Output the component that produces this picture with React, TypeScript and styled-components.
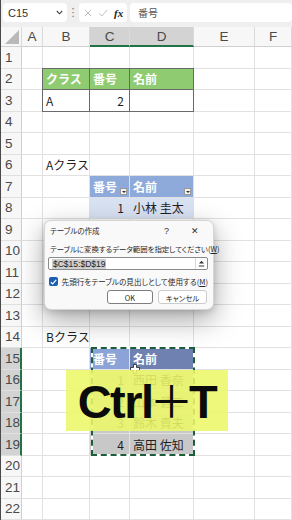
import React from "react"
import styled, { createGlobalStyle } from "styled-components"

const GlobalStyle = createGlobalStyle`
  html, body { margin: 0; padding: 0; background: #fff; }
  body { font-family: "Noto Sans CJK JP", "Liberation Sans", sans-serif; }
`

const ROW_H = 21.5
const ROWS = 22
const COLS = ["A", "B", "C", "D", "E", "F"]
const SEL_COLS = ["C", "D"]
const SEL_ROWS = [15, 16, 17, 18, 19]

type Kind = "plain" | "green" | "boxed" | "blueHead" | "blueBody" | "slateHead" | "slateActive" | "selected"

interface CellData {
  text?: string
  kind?: Kind
  align?: "left" | "right"
  filter?: boolean
}

const cells: Record<string, CellData> = {
  B2: { text: "クラス", kind: "green" },
  C2: { text: "番号", kind: "green" },
  D2: { text: "名前", kind: "green" },
  B3: { text: "A", kind: "boxed" },
  C3: { text: "2", kind: "boxed", align: "right" },
  D3: { kind: "boxed" },
  B6: { text: "Aクラス" },
  C7: { text: "番号", kind: "blueHead", filter: true },
  D7: { text: "名前", kind: "blueHead", filter: true },
  C8: { text: "1", kind: "blueBody", align: "right" },
  D8: { text: "小林 圭太", kind: "blueBody" },
  B14: { text: "Bクラス" },
  C15: { text: "番号", kind: "slateActive" },
  D15: { text: "名前", kind: "slateHead" },
  C16: { text: "1", kind: "selected", align: "right" },
  D16: { text: "西田 香奈", kind: "selected" },
  C17: { text: "2", kind: "selected", align: "right" },
  D17: { text: "山本 健二", kind: "selected" },
  C18: { text: "3", kind: "selected", align: "right" },
  D18: { text: "鈴木 貴夫", kind: "selected" },
  C19: { text: "4", kind: "selected", align: "right" },
  D19: { text: "高田 佐知", kind: "selected" },
}

const fills: Record<Kind, { bg: string; color: string; bold?: boolean; box?: string }> = {
  plain: { bg: "#ffffff", color: "#1f1f1f" },
  green: { bg: "#8fcb70", color: "#ffffff", bold: true, box: "#6a6a6a" },
  boxed: { bg: "#ffffff", color: "#1f1f1f", box: "#6a6a6a" },
  blueHead: { bg: "#8eaadb", color: "#ffffff", bold: true },
  blueBody: { bg: "#d9e2f3", color: "#1f1f1f" },
  slateHead: { bg: "#6e81b0", color: "#ffffff", bold: true },
  slateActive: { bg: "#8ba3d6", color: "#ffffff", bold: true },
  selected: { bg: "#c8c8c8", color: "#1f1f1f" },
}

const Screen = styled.div`
  position: relative;
  width: 292px;
  height: 520px;
  overflow: hidden;
  background: #ffffff;
  border-left: 1px solid #4a4a4a;
  box-sizing: border-box;
`

const FormulaBar = styled.div`
  display: flex;
  align-items: stretch;
  gap: 3px;
  height: 27px;
  padding: 3px 0 5px 2px;
  box-sizing: border-box;
  background: #efefef;
`

const BarBox = styled.div<{ $width?: number }>`
  display: flex;
  align-items: center;
  background: #ffffff;
  border-radius: 4px;
  box-sizing: border-box;
  ${(p) => (p.$width ? `width: ${p.$width}px;` : "flex: 1;")}
`

const NameBox = styled(BarBox)`
  justify-content: space-between;
  padding: 0 4px 0 5px;
  font-family: "Liberation Sans", sans-serif;
  font-size: 11px;
  color: #333;
`

const BarDots = styled.div`
  display: flex;
  align-items: center;
  width: 6px;
  justify-content: center;
  color: #777;
  font-size: 11px;
  font-family: "DejaVu Sans", sans-serif;
`

const FxBox = styled(BarBox)`
  gap: 6px;
  padding-left: 5px;
`

const FxLabel = styled.span`
  font-family: "Liberation Serif", serif;
  font-style: italic;
  font-weight: bold;
  font-size: 11px;
  color: #222;
`

const FormulaText = styled(BarBox)`
  padding-left: 8px;
  font-size: 10px;
  color: #555;
`

const Sheet = styled.div`
  display: grid;
  grid-template-columns: 21px 21px 47px 40px 64px 61px 1fr;
  grid-template-rows: 20px;
  grid-auto-rows: ${ROW_H}px;
`

const Corner = styled.div`
  position: relative;
  background: #f7f7f7;
  border-right: 1px solid #d8d8d8;
  border-bottom: 1px solid #d0d0d0;
  box-sizing: border-box;
  &::after {
    content: "";
    position: absolute;
    right: 2px;
    bottom: 2px;
    width: 14px;
    height: 14px;
    background: #b9b9b9;
    clip-path: polygon(100% 0, 100% 100%, 0 100%);
  }
`

const ColHeader = styled.div<{ $selected?: boolean }>`
  display: flex;
  align-items: center;
  justify-content: center;
  font-family: "Liberation Sans", sans-serif;
  font-size: 13.5px;
  color: #4a4a4a;
  background: ${(p) => (p.$selected ? "#d3d3d3" : "#f7f7f7")};
  border-right: 1px solid #dadada;
  border-bottom: ${(p) => (p.$selected ? "2px solid #217346" : "1px solid #d0d0d0")};
  box-sizing: border-box;
`

const RowHeader = styled.div<{ $selected?: boolean }>`
  display: flex;
  align-items: center;
  padding-left: 4px;
  font-family: "Liberation Sans", sans-serif;
  font-size: 13.5px;
  color: #4a4a4a;
  background: ${(p) => (p.$selected ? "#d3d3d3" : "#f7f7f7")};
  border-right: ${(p) => (p.$selected ? "2px solid #217346" : "1px solid #d0d0d0")};
  border-bottom: 1px solid #e0e0e0;
  box-sizing: border-box;
`

const Cell = styled.div<{ $kind: Kind; $align: "left" | "right" }>`
  position: relative;
  display: flex;
  align-items: center;
  justify-content: ${(p) => (p.$align === "right" ? "flex-end" : "flex-start")};
  padding: ${(p) => (p.$align === "right" ? "0 5px 0 3px" : "0 3px")};
  font-size: 12px;
  white-space: nowrap;
  color: ${(p) => fills[p.$kind].color};
  font-weight: ${(p) => (fills[p.$kind].bold ? 700 : 400)};
  background: ${(p) => fills[p.$kind].bg};
  border-right: 1px solid #e1e1e1;
  border-bottom: 1px solid #e1e1e1;
  box-sizing: border-box;
  ${(p) =>
    fills[p.$kind].box &&
    `
      &::after {
        content: "";
        position: absolute;
        inset: -1px;
        border: 1px solid ${fills[p.$kind].box};
        pointer-events: none;
        z-index: 1;
      }
    `}
`

const FilterButton = styled.span`
  align-self: flex-end;
  margin: 0 -1px 2px auto;
  width: 7px;
  height: 7px;
  background: #f2f2f2;
  border: 1px solid #9a9a9a;
  box-sizing: border-box;
  position: relative;
  &::after {
    content: "";
    position: absolute;
    left: 1px;
    top: 2px;
    border-left: 2px solid transparent;
    border-right: 2px solid transparent;
    border-top: 2px solid #333;
  }
`

const MarchingAnts = styled.div`
  position: absolute;
  left: 90px;
  top: 347px;
  width: 104px;
  height: 109px;
  border: 2px solid #ffffff;
  box-sizing: border-box;
  z-index: 2;
  &::after {
    content: "";
    position: absolute;
    inset: -2px;
    border: 2px dashed #1d5e3a;
  }
`

const Cursor = styled.svg`
  position: absolute;
  left: 129px;
  top: 364px;
  z-index: 3;
`

const KeyOverlay = styled.div`
  position: absolute;
  left: 65px;
  top: 370px;
  width: 162px;
  height: 61px;
  display: flex;
  align-items: center;
  justify-content: center;
  background: rgba(236, 247, 104, 0.88);
  z-index: 4;
`

const KeyText = styled.span`
  font-family: "Liberation Sans", sans-serif;
  font-weight: 700;
  font-size: 47px;
  letter-spacing: -1.5px;
  color: #0b0b0b;
  line-height: 1;
`

const KeyPlus = styled.span`
  font-family: "Noto Sans CJK JP", sans-serif;
  font-weight: 400;
  font-size: 44px;
  margin: 0 -3px;
`

const Dialog = styled.div`
  position: absolute;
  left: 43px;
  top: 220px;
  width: 170px;
  height: 90px;
  display: flex;
  flex-direction: column;
  padding: 0 5px 5px 3px;
  box-sizing: border-box;
  background: #f9f9f9;
  border: 1px solid #d6d6d6;
  border-radius: 7px;
  box-shadow: 0 10px 28px rgba(0, 0, 0, 0.35), 0 2px 6px rgba(0, 0, 0, 0.15);
  font-feature-settings: "palt";
  color: #2a2a2a;
  z-index: 5;
`

const DialogTitleBar = styled.div`
  display: flex;
  align-items: center;
  height: 20px;
  padding-left: 2px;
  font-size: 7.5px;
`

const TitleButtons = styled.div`
  display: flex;
  gap: 22px;
  margin-left: auto;
  margin-right: 9px;
  font-family: "Liberation Sans", sans-serif;
  font-size: 9px;
  color: #333;
`

const DialogLabel = styled.div`
  margin-top: 4px;
  padding-left: 2px;
  height: 10px;
  line-height: 10px;
  font-size: 7.4px;
  white-space: nowrap;
  u { text-underline-offset: 1px; }
`

const RangeField = styled.div`
  display: flex;
  align-items: center;
  margin-top: 3px;
  height: 13px;
  padding-left: 3px;
  background: #ffffff;
  border: 1px solid #8a8a8a;
  border-radius: 2px;
  box-sizing: border-box;
`

const RangeText = styled.span`
  background: #cfcfcf;
  font-family: "Liberation Sans", sans-serif;
  font-size: 8.5px;
  line-height: 10px;
  color: #222;
  padding: 0 1px;
`

const CollapseButton = styled.span`
  display: flex;
  align-items: center;
  justify-content: center;
  margin-left: auto;
  width: 11px;
  height: 100%;
  border-left: 1px solid #d8d8d8;
`

const CheckRow = styled.div`
  display: flex;
  align-items: center;
  gap: 4px;
  margin-top: 6px;
  padding-left: 1px;
  height: 12px;
  font-size: 7.6px;
  white-space: nowrap;
`

const CheckBox = styled.span`
  display: flex;
  align-items: center;
  justify-content: center;
  width: 9px;
  height: 9px;
  border-radius: 2px;
  background: #1a5fb4;
`

const ButtonRow = styled.div`
  display: flex;
  justify-content: flex-end;
  gap: 5px;
  margin-top: 3px;
  padding-right: 1px;
  height: 14px;
`

const DialogButton = styled.div<{ $default?: boolean }>`
  display: flex;
  align-items: center;
  justify-content: center;
  width: ${(p) => (p.$default ? 46 : 49)}px;
  background: #ffffff;
  border: 1px solid ${(p) => (p.$default ? "#7d7d7d" : "#cccccc")};
  border-radius: 3px;
  box-sizing: border-box;
  font-size: 7.4px;
  color: #222;
`

const App: React.FC = () => {
  const rows = Array.from({ length: ROWS }, (_, i) => i + 1)
  return (
    <>
      <GlobalStyle />
      <Screen>
        <FormulaBar>
          <NameBox $width={64}>
            C15
            <svg width="7" height="5" viewBox="0 0 7 5">
              <path d="M0.8 1 L3.5 3.8 L6.2 1" fill="none" stroke="#444" strokeWidth="1.1" />
            </svg>
          </NameBox>
          <BarDots>⋮</BarDots>
          <FxBox $width={48}>
            <svg width="8" height="8" viewBox="0 0 8 8">
              <path d="M1 1 L7 7 M7 1 L1 7" stroke="#b8b8b8" strokeWidth="0.9" />
            </svg>
            <svg width="10" height="8" viewBox="0 0 10 8">
              <path d="M1 4.2 L3.8 7 L9.2 1" fill="none" stroke="#b8b8b8" strokeWidth="0.9" />
            </svg>
            <FxLabel>fx</FxLabel>
          </FxBox>
          <FormulaText>番号</FormulaText>
        </FormulaBar>

        <Sheet>
          <Corner />
          {COLS.map((c) => (
            <ColHeader key={c} $selected={SEL_COLS.includes(c)}>
              {c}
            </ColHeader>
          ))}
          {rows.map((r) => (
            <React.Fragment key={r}>
              <RowHeader $selected={SEL_ROWS.includes(r)}>{r}</RowHeader>
              {COLS.map((c) => {
                const d = cells[`${c}${r}`] ?? {}
                return (
                  <Cell key={c} $kind={d.kind ?? "plain"} $align={d.align ?? "left"}>
                    {d.text}
                    {d.filter && <FilterButton />}
                  </Cell>
                )
              })}
            </React.Fragment>
          ))}
        </Sheet>

        <MarchingAnts />
        <Cursor width="10" height="10" viewBox="0 0 10 10">
          <path d="M3.5 0.5 H6.5 V3.5 H9.5 V6.5 H6.5 V9.5 H3.5 V6.5 H0.5 V3.5 H3.5 Z" fill="#fff" stroke="#222" strokeWidth="0.8" />
        </Cursor>

        <KeyOverlay>
          <KeyText>
            Ctrl<KeyPlus>＋</KeyPlus>T
          </KeyText>
        </KeyOverlay>

        <Dialog>
          <DialogTitleBar>
            テーブルの作成
            <TitleButtons>
              <span>?</span>
              <span>✕</span>
            </TitleButtons>
          </DialogTitleBar>
          <DialogLabel>
            テーブルに変換するデータ範囲を指定してください(<u>W</u>)
          </DialogLabel>
          <RangeField>
            <RangeText>$C$15:$D$19</RangeText>
            <CollapseButton>
              <svg width="7" height="7" viewBox="0 0 7 7">
                <path d="M3.5 0.8 L6 3.6 H1 Z" fill="#333" />
                <path d="M0.8 6 H6.2" stroke="#333" strokeWidth="1" />
              </svg>
            </CollapseButton>
          </RangeField>
          <CheckRow>
            <CheckBox>
              <svg width="7" height="6" viewBox="0 0 7 6">
                <path d="M0.8 3.2 L2.7 5 L6.2 0.9" fill="none" stroke="#fff" strokeWidth="1.2" />
              </svg>
            </CheckBox>
            <span>
              先頭行をテーブルの見出しとして使用する(<u>M</u>)
            </span>
          </CheckRow>
          <ButtonRow>
            <DialogButton $default>OK</DialogButton>
            <DialogButton>キャンセル</DialogButton>
          </ButtonRow>
        </Dialog>
      </Screen>
    </>
  )
}

export default App
